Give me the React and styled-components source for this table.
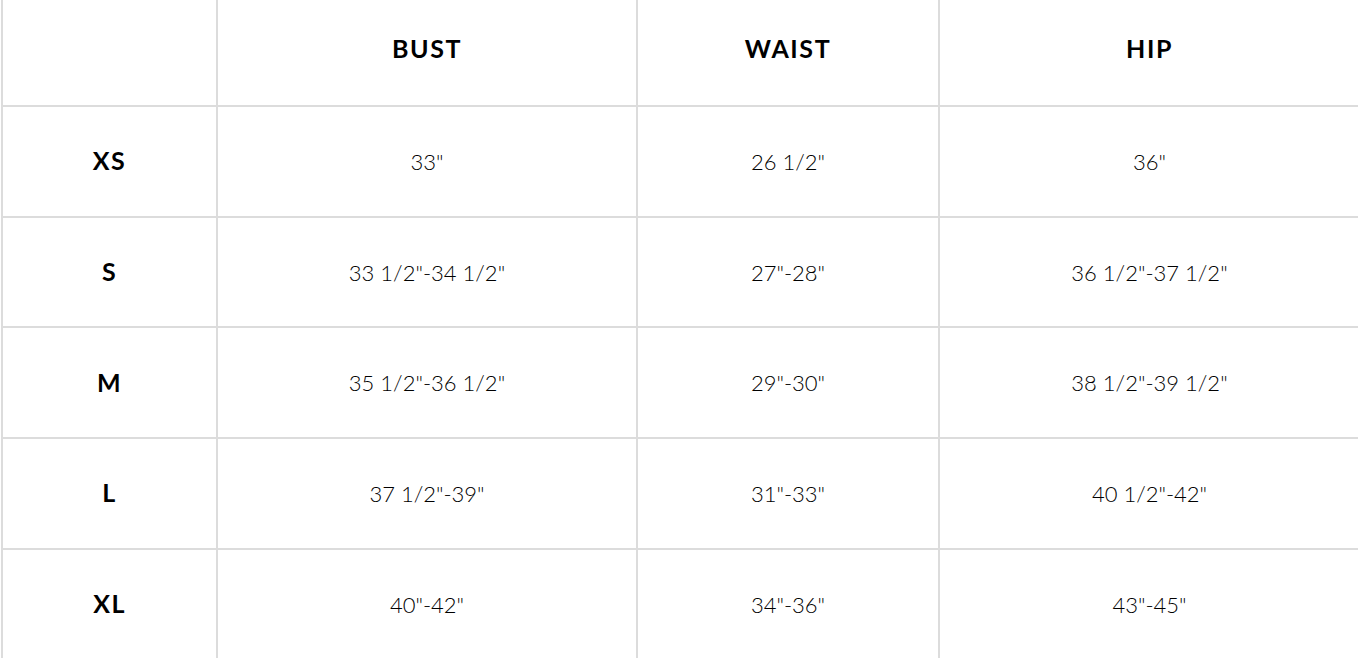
import React from 'react';
import styled, { createGlobalStyle } from 'styled-components';

const GlobalStyle = createGlobalStyle`
  html, body {
    margin: 0;
    padding: 0;
    background: #ffffff;
    overflow: hidden;
  }
  body {
    font-family: Lato, "Open Sans", "Liberation Sans", sans-serif;
    color: #111;
  }
`;

const Table = styled.table`
  margin-left: 1px;
  width: 1360px;
  table-layout: fixed;
  border-collapse: separate;
  border-spacing: 0;
  border-left: 2px solid #dcdcdc;
`;

const Col = styled.col`
  width: ${props => props.w}px;
`;

const HeadRow = styled.tr`
  height: 107px;
`;

const BodyRow = styled.tr`
  height: 110.7px;
`;

const HeadCell = styled.th`
  box-sizing: border-box;
  padding: 0 0 10px;
  border-right: 2px solid #dcdcdc;
  border-bottom: 2px solid #dcdcdc;
  font-size: 25px;
  font-weight: 700;
  letter-spacing: 1.6px;
  color: #000;
  text-align: center;
  vertical-align: middle;
`;

const SizeCell = styled.th`
  box-sizing: border-box;
  padding: 0 0 2px;
  border-right: 2px solid #dcdcdc;
  border-bottom: 2px solid #dcdcdc;
  font-size: 25px;
  font-weight: 700;
  letter-spacing: 1.4px;
  color: #000;
  text-align: center;
  vertical-align: middle;
`;

const ValueCell = styled.td`
  box-sizing: border-box;
  padding: 0;
  border-right: 2px solid #dcdcdc;
  border-bottom: 2px solid #dcdcdc;
  font-size: 22px;
  font-weight: 300;
  color: #000;
  text-align: center;
  vertical-align: middle;
`;

const columns = ['BUST', 'WAIST', 'HIP'];

const sizes = [
  { size: 'XS', values: ['33"', '26 1/2"', '36"'] },
  { size: 'S', values: ['33 1/2"-34 1/2"', '27"-28"', '36 1/2"-37 1/2"'] },
  { size: 'M', values: ['35 1/2"-36 1/2"', '29"-30"', '38 1/2"-39 1/2"'] },
  { size: 'L', values: ['37 1/2"-39"', '31"-33"', '40 1/2"-42"'] },
  { size: 'XL', values: ['40"-42"', '34"-36"', '43"-45"'] },
];

function SizeChart() {
  return (
    <Table>
      <colgroup>
        <Col w={215} />
        <Col w={420} />
        <Col w={302} />
        <Col w={421} />
      </colgroup>
      <thead>
        <HeadRow>
          <HeadCell></HeadCell>
          {columns.map(col => (
            <HeadCell key={col}>{col}</HeadCell>
          ))}
        </HeadRow>
      </thead>
      <tbody>
        {sizes.map(row => (
          <BodyRow key={row.size}>
            <SizeCell>{row.size}</SizeCell>
            {row.values.map((v, i) => (
              <ValueCell key={i}>{v}</ValueCell>
            ))}
          </BodyRow>
        ))}
      </tbody>
    </Table>
  );
}

export default function App() {
  return (
    <>
      <GlobalStyle />
      <SizeChart />
    </>
  );
}
